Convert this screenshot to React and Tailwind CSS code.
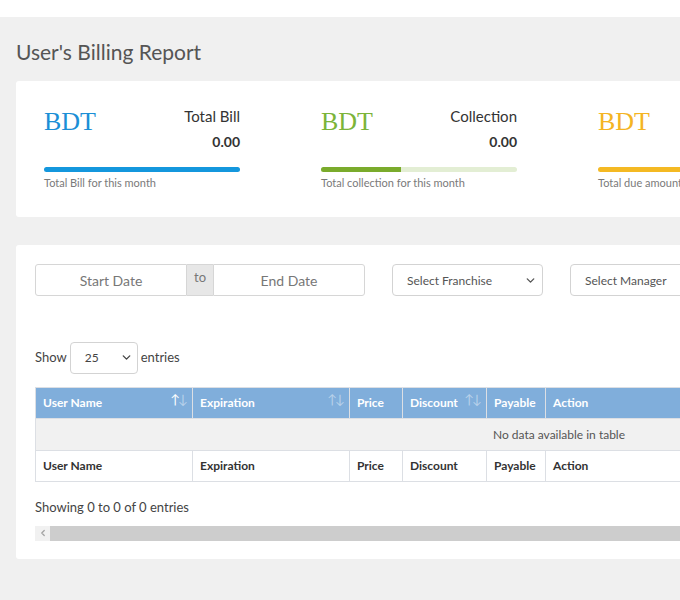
import { ChevronDown, ChevronLeft } from 'lucide-react';

const stats = [
  { label: 'Total Bill', value: '0.00', note: 'Total Bill for this month', color: 'text-[#1b8fd6]', bar: 'bg-[#1497dd]', track: 'bg-[#1497dd]', fill: 'w-full' },
  { label: 'Collection', value: '0.00', note: 'Total collection for this month', color: 'text-[#7cb439]', bar: 'bg-[#7aab2c]', track: 'bg-[#e3eed4]', fill: 'w-[80px]' },
  { label: 'Due', value: '0.00', note: 'Total due amount for this month', color: 'text-[#f4b423]', bar: 'bg-[#f4b923]', track: 'bg-[#f4b923]', fill: 'w-full' },
];

const columns = [
  { name: 'User Name', w: 'w-[157px]', sort: 'asc' },
  { name: 'Expiration', w: 'w-[157px]', sort: 'both' },
  { name: 'Price', w: 'w-[53px]' },
  { name: 'Discount', w: 'w-[84px]', sort: 'both' },
  { name: 'Payable', w: 'w-[59px]' },
  { name: 'Action', w: 'w-[537px]' },
];

function SortIcon({ sort }) {
  if (!sort) return null;
  return (
    <span className="absolute right-[6px] top-[5px] text-[13px] leading-none font-normal tracking-[-2px]">
      <span className={sort === 'asc' ? 'text-white' : 'text-[#b8d1ea]'}>↑</span>
      <span className="text-[#b8d1ea]">↓</span>
    </span>
  );
}

export default function App() {
  return (
    <div className="w-[680px] min-h-screen overflow-hidden bg-[#f0f0f0] font-['Lato',sans-serif] text-[#333]">
      <div className="h-[17px] bg-white" />

      <div className="pl-4">
        <h1 className="text-[21px] text-[#555] leading-none pt-[24px] pb-[19px]">User's Billing Report</h1>

        <div className="w-[900px] bg-white rounded-[3px] h-[136px] pl-[28px] pt-[25px] flex gap-[81px]">
          {stats.map((s, i) => (
            <div key={i} className="w-[196px] shrink-0">
              <div className="flex justify-between items-start h-[46px]">
                <span className={`font-['Liberation_Serif',serif] text-[26px] leading-none mt-[3px] ${s.color}`}>BDT</span>
                <div className="text-right">
                  <div className="text-[15px] leading-[20px] text-[#333]">{i < 2 ? s.label : ''}</div>
                  <div className="text-[14px] font-bold leading-[20px] mt-[6px]">{i < 2 ? s.value : ''}</div>
                </div>
              </div>
              <div className={`h-[5px] rounded-full ${s.track} mt-[15px] overflow-hidden`}>
                <div className={`h-full ${s.fill} ${s.bar}`} />
              </div>
              <div className="text-[11px] text-[#7a7a7a] mt-[3px] whitespace-nowrap">{s.note}</div>
            </div>
          ))}
        </div>

        <div className="mt-[28px] w-[1100px] bg-white rounded-[3px] h-[314px] pl-[19px] pt-[19px]">
          <div className="flex gap-[27px] items-center">
            <div className="flex h-[32px] w-[330px] text-[14px] text-[#777]">
              <div className="w-[152px] border border-[#d6d6d6] rounded-l-[3px] flex items-center justify-center">Start Date</div>
              <div className="w-[26px] bg-[#e7e7e7] border-y border-[#d6d6d6] text-[13px] text-center leading-[24px]">to</div>
              <div className="w-[152px] border border-[#d6d6d6] rounded-r-[3px] flex items-center justify-center">End Date</div>
            </div>
            <div className="w-[151px] h-[32px] border border-[#d3d3d3] rounded-[4px] flex items-center justify-between pl-[14px] pr-[5px] pt-[1px] text-[12px] text-[#555]">
              <span>Select Franchise</span>
              <ChevronDown size={13} strokeWidth={2.5} className="text-[#555]" />
            </div>
            <div className="w-[151px] h-[32px] border border-[#d3d3d3] rounded-[4px] flex items-center justify-between pl-[14px] pr-[5px] pt-[1px] text-[12px] text-[#555]">
              <span>Select Manager</span>
              <ChevronDown size={13} strokeWidth={2.5} className="text-[#555]" />
            </div>
          </div>

          <div className="flex items-center mt-[45px] text-[13px] text-[#444] h-[33px]">
            <span>Show</span>
            <div className="w-[68px] h-[32px] ml-[3px] mr-[3px] border border-[#d3d3d3] rounded-[4px] flex items-center justify-between pl-[14px] pr-[4px] text-[12px]">
              <span>25</span>
              <ChevronDown size={13} strokeWidth={2.5} />
            </div>
            <span>entries</span>
          </div>

          <table className="mt-[13px] border-collapse text-[12px] table-fixed w-[1047px]">
            <thead>
              <tr className="bg-[#80aedb] text-white h-[31px]">
                {columns.map((c) => (
                  <th key={c.name} className={`${c.w} relative border border-[#dcdfe4] text-left font-bold px-[7px]`}>
                    {c.name}
                    <SortIcon sort={c.sort} />
                  </th>
                ))}
              </tr>
            </thead>
            <tbody>
              <tr className="bg-[#f1f1f1] h-[32px]">
                <td colSpan={6} className="border border-[#dcdfe4] text-center text-[#555]">No data available in table</td>
              </tr>
            </tbody>
            <tfoot>
              <tr className="h-[31px]">
                {columns.map((c) => (
                  <th key={c.name} className="border border-[#dcdfe4] text-left font-bold px-[7px] text-[#333]">{c.name}</th>
                ))}
              </tr>
            </tfoot>
          </table>

          <div className="text-[13px] text-[#444] mt-[16px]">Showing 0 to 0 of 0 entries</div>

          <div className="mt-[8px] h-[15px] w-[1047px] bg-[#cdcdcd] flex">
            <div className="w-[15px] h-full bg-[#f1f1f1] flex items-center justify-center">
              <ChevronLeft size={10} strokeWidth={3} className="text-[#a3a3a3]" />
            </div>
          </div>
        </div>
      </div>
    </div>
  );
}
